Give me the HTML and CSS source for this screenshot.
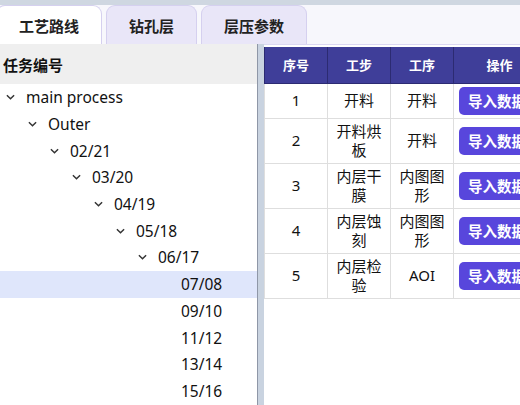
FILE: index.html
```html
<!DOCTYPE html>
<html lang="zh">
<head>
<meta charset="utf-8">
<title>工艺路线</title>
<link rel="stylesheet" href="styles.css">
</head>
<body>
<div class="app">
  <div class="tabbar">
    <div class="tab active">工艺路线</div>
    <div class="tab">钻孔层</div>
    <div class="tab">层压参数</div>
  </div>
  <div class="main">
    <div class="left">
      <div class="left-head">任务编号</div>
      <div class="tree">
        <div class="node lv0"><span class="chev"><svg viewBox="0 0 10 6" width="9" height="6"><path d="M1 1 L5 5 L9 1" fill="none" stroke="#333" stroke-width="1.6"/></svg></span>main process</div>
        <div class="node lv1"><span class="chev"><svg viewBox="0 0 10 6" width="9" height="6"><path d="M1 1 L5 5 L9 1" fill="none" stroke="#333" stroke-width="1.6"/></svg></span>Outer</div>
        <div class="node lv2"><span class="chev"><svg viewBox="0 0 10 6" width="9" height="6"><path d="M1 1 L5 5 L9 1" fill="none" stroke="#333" stroke-width="1.6"/></svg></span>02/21</div>
        <div class="node lv3"><span class="chev"><svg viewBox="0 0 10 6" width="9" height="6"><path d="M1 1 L5 5 L9 1" fill="none" stroke="#333" stroke-width="1.6"/></svg></span>03/20</div>
        <div class="node lv4"><span class="chev"><svg viewBox="0 0 10 6" width="9" height="6"><path d="M1 1 L5 5 L9 1" fill="none" stroke="#333" stroke-width="1.6"/></svg></span>04/19</div>
        <div class="node lv5"><span class="chev"><svg viewBox="0 0 10 6" width="9" height="6"><path d="M1 1 L5 5 L9 1" fill="none" stroke="#333" stroke-width="1.6"/></svg></span>05/18</div>
        <div class="node lv6"><span class="chev"><svg viewBox="0 0 10 6" width="9" height="6"><path d="M1 1 L5 5 L9 1" fill="none" stroke="#333" stroke-width="1.6"/></svg></span>06/17</div>
        <div class="node lv7 selected"><span class="chev"></span>07/08</div>
        <div class="node lv7"><span class="chev"></span>09/10</div>
        <div class="node lv7"><span class="chev"></span>11/12</div>
        <div class="node lv7"><span class="chev"></span>13/14</div>
        <div class="node lv7"><span class="chev"></span>15/16</div>
      </div>
    </div>
    <div class="divider"></div>
    <div class="right">
      <table class="grid">
        <colgroup>
          <col class="c1"><col class="c2"><col class="c3"><col class="c4">
        </colgroup>
        <thead>
          <tr><th>序号</th><th>工步</th><th>工序</th><th>操作</th></tr>
        </thead>
        <tbody>
          <tr><td>1</td><td>开料</td><td>开料</td><td class="op"><button class="btn">导入数据</button></td></tr>
          <tr><td>2</td><td>开料烘板</td><td>开料</td><td class="op"><button class="btn">导入数据</button></td></tr>
          <tr><td>3</td><td>内层干膜</td><td>内图图形</td><td class="op"><button class="btn">导入数据</button></td></tr>
          <tr><td>4</td><td>内层蚀刻</td><td>内图图形</td><td class="op"><button class="btn">导入数据</button></td></tr>
          <tr><td>5</td><td>内层检验</td><td>AOI</td><td class="op"><button class="btn">导入数据</button></td></tr>
        </tbody>
      </table>
    </div>
  </div>
</div>
</body>
</html>
```

FILE: styles.css
```css
* { box-sizing: border-box; }
html, body { margin: 0; padding: 0; }
body {
  width: 520px;
  height: 405px;
  overflow: hidden;
  font-family: "Noto Sans", "Noto Sans CJK SC", sans-serif;
  color: #111;
  background: #fff;
}
.app {
  display: flex;
  flex-direction: column;
  height: 405px;
}
.tabbar {
  display: flex;
  gap: 4px;
  height: 44px;
  padding-top: 5px;
  background: #f7f7fc;
  box-shadow: inset 0 5px 0 #cfd7e1;
  flex: none;
}
.tab {
  height: 39px;
  padding: 0 22px;
  border: 1px solid #d5d0ef;
  border-bottom: 0;
  border-radius: 9px 9px 0 0;
  background: #e9e6f8;
  font-family: "Noto Sans CJK SC", sans-serif;
  font-weight: bold;
  font-size: 15px;
  color: #222;
  display: flex;
  align-items: center;
}
.tab.active {
  background: #fff;
  margin-left: -4px;
}
.main {
  flex: 1;
  display: flex;
  min-height: 0;
}
.left {
  width: 258px;
  flex: none;
  border-right: 1px solid #8f97a7;
  overflow: hidden;
}
.left-head {
  height: 40px;
  background: #efefef;
  font-family: "Noto Sans CJK SC", sans-serif;
  font-weight: bold;
  font-size: 15px;
  display: flex;
  align-items: center;
  padding-left: 3px;
  color: #111;
}
.tree {
  display: flex;
  flex-direction: column;
}
.node {
  height: 26.7px;
  display: flex;
  align-items: center;
  font-size: 15.5px;
  white-space: nowrap;
  color: #111;
}
.node.selected { background: #dfe6fb; }
.chev {
  width: 13px;
  margin-right: 9px;
  display: flex;
  justify-content: center;
  align-items: center;
  flex: none;
}
.lv0 { padding-left: 4px; }
.lv1 { padding-left: 26px; }
.lv2 { padding-left: 48px; }
.lv3 { padding-left: 70px; }
.lv4 { padding-left: 92px; }
.lv5 { padding-left: 114px; }
.lv6 { padding-left: 136px; }
.lv7 { padding-left: 159px; }
.divider {
  width: 6px;
  flex: none;
  background: #c9d3e0;
}
.right {
  flex: 1;
  overflow: hidden;
  border-top: 1px solid #dcd8f2;
  padding-top: 2px;
}
.grid {
  border-collapse: collapse;
  table-layout: fixed;
  width: 281px;
  font-family: "Noto Sans", "Noto Sans CJK SC", sans-serif;
}
.c1 { width: 63px; }
.c2 { width: 63px; }
.c3 { width: 63px; }
.c4 { width: 92px; }
.grid th {
  height: 36px;
  background: #3f3e99;
  color: #fff;
  font-family: "Noto Sans CJK SC", sans-serif;
  font-weight: bold;
  font-size: 13px;
  border: 1px solid #2c2b72;
  border-top: 0;
  padding: 0;
}
.grid td {
  border: 1px solid #dedede;
  padding: 3px;
  text-align: center;
  vertical-align: middle;
  font-size: 15px;
  line-height: 19px;
  color: #111;
}
.grid td.op {
  padding: 3px 0 3px 5px;
  text-align: left;
  white-space: nowrap;
}
.btn {
  height: 28px;
  padding: 0 9px;
  border: 0;
  border-radius: 5px;
  background: #5846dc;
  color: #fff;
  font-family: "Noto Sans CJK SC", sans-serif;
  font-weight: bold;
  font-size: 14.5px;
  display: block;
}
```
